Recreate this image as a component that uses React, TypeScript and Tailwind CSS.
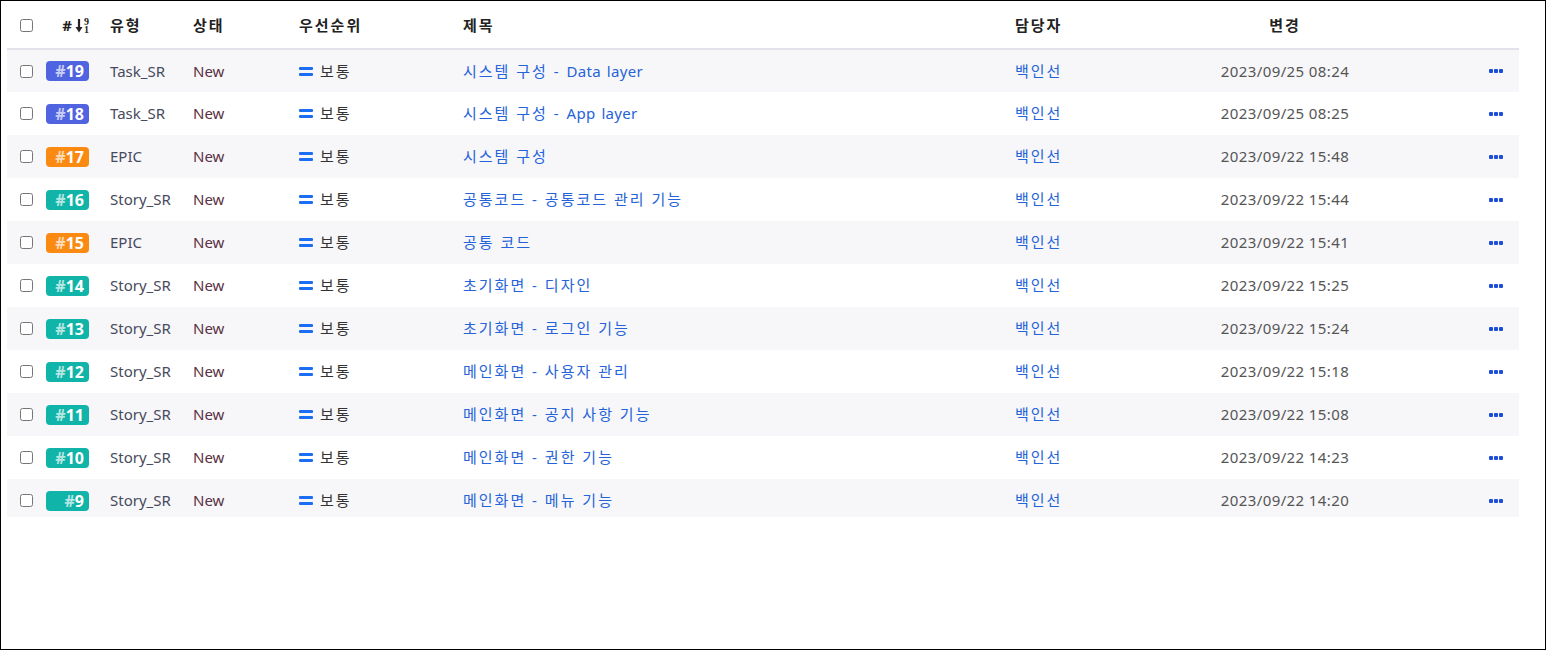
import React from "react"

type Issue = {
  id: number
  type: string
  title: string
  date: string
}

const issues: Issue[] = [
  { id: 19, type: "Task_SR", title: "시스템 구성 - Data layer", date: "2023/09/25 08:24" },
  { id: 18, type: "Task_SR", title: "시스템 구성 - App layer", date: "2023/09/25 08:25" },
  { id: 17, type: "EPIC", title: "시스템 구성", date: "2023/09/22 15:48" },
  { id: 16, type: "Story_SR", title: "공통코드 - 공통코드 관리 기능", date: "2023/09/22 15:44" },
  { id: 15, type: "EPIC", title: "공통 코드", date: "2023/09/22 15:41" },
  { id: 14, type: "Story_SR", title: "초기화면 - 디자인", date: "2023/09/22 15:25" },
  { id: 13, type: "Story_SR", title: "초기화면 - 로그인 기능", date: "2023/09/22 15:24" },
  { id: 12, type: "Story_SR", title: "메인화면 - 사용자 관리", date: "2023/09/22 15:18" },
  { id: 11, type: "Story_SR", title: "메인화면 - 공지 사항 기능", date: "2023/09/22 15:08" },
  { id: 10, type: "Story_SR", title: "메인화면 - 권한 기능", date: "2023/09/22 14:23" },
  { id: 9, type: "Story_SR", title: "메인화면 - 메뉴 기능", date: "2023/09/22 14:20" },
]

const badgeColor = (type: string) => {
  if (type === "Task_SR") return "bg-[#5063e0]"
  if (type === "EPIC") return "bg-[#fb8a12]"
  return "bg-[#10b4a8]"
}

// korean runs get wider spacing, latin runs stay as is
const Mixed = ({ text }: { text: string }) => (
  <>
    {text.split(/([A-Za-z0-9_]+)/).map((part, i) =>
      /^[A-Za-z0-9_]+$/.test(part) ? (
        <span key={i} className="tracking-[0.3px]">{part}</span>
      ) : (
        <span key={i} className="tracking-[2px]">{part}</span>
      )
    )}
  </>
)

const Checkbox = () => (
  <input type="checkbox" className="m-0 block h-[13px] w-[13px]" />
)

const SortIcon = () => (
  <span className="flex items-center gap-[1px]">
    <svg width="8" height="15" viewBox="0 0 8 15" className="text-[#222]">
      <path d="M4 1v11" stroke="currentColor" strokeWidth="2.2" />
      <path d="M0.5 9L4 14.5 7.5 9z" fill="currentColor" />
    </svg>
    <span className="flex flex-col font-['Liberation_Serif',serif] text-[10px] font-bold leading-[8px] text-[#222]">
      <span>9</span>
      <span>1</span>
    </span>
  </span>
)

const PriorityIcon = () => (
  <span className="flex flex-col gap-[3px]">
    <span className="block h-[3px] w-[14px] rounded-[1px] bg-[#1b6ef3]" />
    <span className="block h-[3px] w-[14px] rounded-[1px] bg-[#1b6ef3]" />
  </span>
)

const MoreIcon = () => (
  <span className="flex gap-[1px]">
    <span className="block h-[4px] w-[4px] rounded-[1px] bg-[#1d4fd6]" />
    <span className="block h-[4px] w-[4px] rounded-[1px] bg-[#1d4fd6]" />
    <span className="block h-[4px] w-[4px] rounded-[1px] bg-[#1d4fd6]" />
  </span>
)

export default function App() {
  return (
    <div className="h-[650px] w-[1546px] border border-black bg-white font-['Noto_Sans','Noto_Sans_CJK_KR',sans-serif] text-[15px]">
      <div className="h-[516px] overflow-hidden px-[6px]">
        <table className="w-[1512px] table-fixed border-collapse">
          <colgroup>
            <col className="w-[33px]" />
            <col className="w-[60px]" />
            <col className="w-[83px]" />
            <col className="w-[106px]" />
            <col className="w-[164px]" />
            <col className="w-[552px]" />
            <col className="w-[155px]" />
            <col className="w-[250px]" />
            <col className="w-[109px]" />
          </colgroup>
          <thead>
            <tr className="h-[48px] border-b-2 border-[#e2e3ea] text-left font-bold text-[#222]">
              <th className="pl-[13px] pt-[2px]">
                <Checkbox />
              </th>
              <th className="pt-[2px]">
                <div className="flex items-center justify-end gap-[3px] pr-[11px]">
                  <span>#</span>
                  <SortIcon />
                </div>
              </th>
              <th className="pl-[10px] pt-[2px] font-bold tracking-[2px]">유형</th>
              <th className="pl-[10px] pt-[2px] font-bold tracking-[2px]">상태</th>
              <th className="pl-[10px] pt-[2px] font-bold tracking-[2px]">우선순위</th>
              <th className="pl-[10px] pt-[2px] font-bold tracking-[2px]">제목</th>
              <th className="pl-[10px] pt-[2px] font-bold tracking-[2px]">담당자</th>
              <th className="pt-[2px] text-center font-bold tracking-[2px]">변경</th>
              <th />
            </tr>
          </thead>
          <tbody>
            {issues.map((issue, index) => (
              <tr
                key={issue.id}
                className={index % 2 === 0 ? "h-[43px] bg-[#f7f7fa]" : "h-[43px] bg-white"}
              >
                <td className="pl-[13px]">
                  <Checkbox />
                </td>
                <td className="pl-[6px]">
                  <span
                    className={`flex h-[20px] w-[43px] items-center justify-end rounded-[4px] pr-[5px] text-[16px] font-bold leading-none text-white ${badgeColor(issue.type)}`}
                  >
                    <span className="text-white/70">#</span>
                    {issue.id}
                  </span>
                </td>
                <td className="pl-[10px] text-[#474a5c]">{issue.type}</td>
                <td className="pl-[10px] text-[#5a3143]">New</td>
                <td className="pl-[10px]">
                  <span className="flex items-center gap-[7px] tracking-[2px] text-[#333]">
                    <PriorityIcon />
                    보통
                  </span>
                </td>
                <td className="pl-[10px] text-[#2563d8]">
                  <Mixed text={issue.title} />
                </td>
                <td className="pl-[10px] tracking-[2px] text-[#2563d8]">백인선</td>
                <td className="text-center tracking-[0.4px] text-[#555]">{issue.date}</td>
                <td>
                  <span className="flex justify-end pr-[16px]">
                    <MoreIcon />
                  </span>
                </td>
              </tr>
            ))}
          </tbody>
        </table>
      </div>
    </div>
  )
}
